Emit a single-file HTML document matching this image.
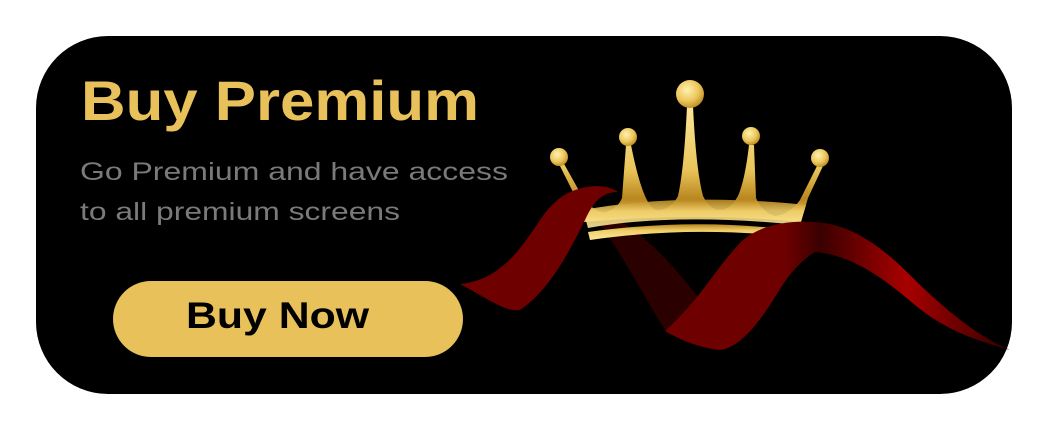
<!DOCTYPE html>
<html><head><style>
html,body{margin:0;padding:0;background:#fff;width:1048px;height:430px;overflow:hidden}
</style></head><body>
<svg width="1048" height="430" viewBox="0 0 1048 430" xmlns="http://www.w3.org/2000/svg">
<defs>
<linearGradient id="g" x1="0" y1="0" x2="0" y2="1">
<stop offset="0" stop-color="#fbe79a"/><stop offset="0.55" stop-color="#e9c45a"/><stop offset="0.8" stop-color="#b9861e"/><stop offset="1" stop-color="#f0cf6a"/>
</linearGradient>
<linearGradient id="band" x1="0" y1="0" x2="0" y2="1">
<stop offset="0" stop-color="#b8861e"/><stop offset="0.4" stop-color="#f0cf6a"/><stop offset="1" stop-color="#fbe79a"/>
</linearGradient>
<radialGradient id="ball" cx="0.4" cy="0.35" r="0.7">
<stop offset="0" stop-color="#fff2b0"/><stop offset="0.6" stop-color="#ebc55a"/><stop offset="1" stop-color="#b8861e"/>
</radialGradient>
<linearGradient id="rr" x1="0" y1="0" x2="1" y2="0">
<stop offset="0" stop-color="#6e0000"/><stop offset="0.35" stop-color="#6e0000"/><stop offset="0.45" stop-color="#3a0000"/><stop offset="0.7" stop-color="#a80000"/><stop offset="1" stop-color="#300000"/>
</linearGradient>
</defs>
<rect x="36" y="36" width="976" height="358" rx="72" fill="#000"/>
<text x="81" y="120" font-family="Liberation Sans, sans-serif" font-weight="bold" font-size="56" fill="#e9c15a" textLength="398" lengthAdjust="spacingAndGlyphs">Buy Premium</text>
<text x="80" y="180" font-family="Liberation Sans, sans-serif" font-size="25" fill="#7a7a7a" textLength="428" lengthAdjust="spacingAndGlyphs">Go Premium and have  access</text>
<text x="80" y="220" font-family="Liberation Sans, sans-serif" font-size="25" fill="#7a7a7a" textLength="320" lengthAdjust="spacingAndGlyphs">to all premium screens</text>
<rect x="113" y="281" width="350" height="76" rx="38" fill="#e8c15a"/>
<text x="186" y="328" font-family="Liberation Sans, sans-serif" font-weight="bold" font-size="37" fill="#000" textLength="183" lengthAdjust="spacingAndGlyphs">Buy Now</text>

<!-- dark back ribbon -->
<path d="M605,212 C640,230 670,260 700,300 L722,336 C700,340 680,335 665,330 C640,290 620,250 598,222 Z" fill="#2a0000"/>
<!-- crown body with spikes -->
<path d="M584,222 L575,196 L558,162 L563,162 L582,196 Q595,214 606,212 Q618,208 622,198 L626,145 L631,145 Q638,180 645,196 Q652,212 660,210 Q672,208 678,196 Q684,170 687,106 L693,106 Q696,170 703,196 Q710,210 720,210 Q730,210 738,196 Q745,180 749,145 L754,145 L756,198 Q762,212 775,216 Q790,214 800,200 L818,164 L823,166 L808,198 L801,222 Q700,212 584,222 Z" fill="url(#g)"/>
<path d="M583,210 C660,196 740,198 806,205 L800,225 C720,217 650,217 588,228 Z" fill="url(#band)" opacity="0.9"/>
<path d="M588,232 C660,222 730,222 790,230 L788,236 C720,230 660,230 590,240 Z" fill="url(#band)"/>
<circle cx="690" cy="94" r="14" fill="url(#ball)"/>
<circle cx="628" cy="137" r="9" fill="url(#ball)"/>
<circle cx="559" cy="157" r="9" fill="url(#ball)"/>
<circle cx="751" cy="136" r="9" fill="url(#ball)"/>
<circle cx="820" cy="158" r="9" fill="url(#ball)"/>
<!-- left ribbon -->
<path d="M460,284 C500,280 520,250 540,220 C555,198 570,188 595,186 C605,186 612,188 618,192 C600,192 592,205 585,220 C570,250 550,290 520,310 C505,312 490,300 460,284 Z" fill="#6e0000"/>
<!-- main right ribbon -->
<path d="M665,331 C700,300 720,262 743,240 C760,226 785,220 815,222 C850,224 880,245 910,275 C940,305 975,335 1010,350 C975,340 945,330 915,305 C880,275 850,255 815,252 C790,268 780,290 770,305 C750,335 735,348 720,350 C700,348 680,340 665,331 Z" fill="url(#rr)"/>
</svg>
</body></html>
